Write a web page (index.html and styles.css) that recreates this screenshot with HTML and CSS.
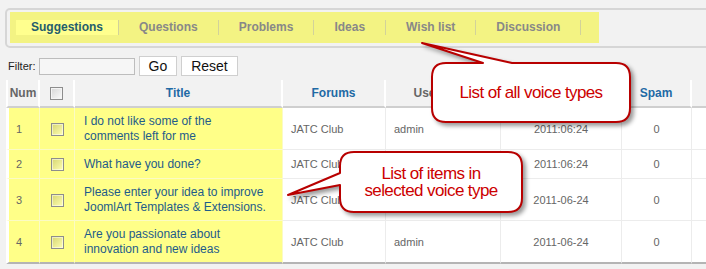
FILE: index.html
```html
<!DOCTYPE html>
<html lang="en">
<head>
  <meta charset="UTF-8" />
  <title>Voices</title>
  <link rel="stylesheet" href="styles.css">
</head>
<body>
<div class="page">

  <div class="tabs">
    <ul class="tab-list">
      <li class="active">Suggestions</li>
      <li>Questions</li>
      <li>Problems</li>
      <li>Ideas</li>
      <li>Wish list</li>
      <li>Discussion</li>
    </ul>
  </div>

  <div class="filter">
    <label for="search">Filter:</label>
    <input type="text" id="search" />
    <button>Go</button>
    <button>Reset</button>
  </div>

  <table class="grid">
    <colgroup>
      <col class="c-num"><col class="c-chk"><col class="c-title"><col class="c-forum">
      <col class="c-user"><col class="c-date"><col class="c-spam"><col class="c-more">
    </colgroup>
    <thead>
      <tr>
        <th class="plain">Num</th>
        <th><span class="check"></span></th>
        <th>Title</th>
        <th>Forums</th>
        <th class="plain">Username</th>
        <th>Created</th>
        <th>Spam</th>
        <th></th>
      </tr>
    </thead>
    <tbody>
      <tr>
        <td class="hl num">1</td>
        <td class="hl chk"><span class="check"></span></td>
        <td class="hl title">I do not like some of the<br>comments left for me</td>
        <td>JATC Club</td>
        <td>admin</td>
        <td class="center">2011:06:24</td>
        <td class="center">0</td>
        <td></td>
      </tr>
      <tr>
        <td class="hl num">2</td>
        <td class="hl chk"><span class="check"></span></td>
        <td class="hl title">What have you done?</td>
        <td>JATC Club</td>
        <td>admin</td>
        <td class="center">2011:06:24</td>
        <td class="center">0</td>
        <td></td>
      </tr>
      <tr>
        <td class="hl num">3</td>
        <td class="hl chk"><span class="check"></span></td>
        <td class="hl title">Please enter your idea to improve<br>JoomlArt Templates &amp; Extensions.</td>
        <td>JATC Club</td>
        <td>admin</td>
        <td class="center">2011-06-24</td>
        <td class="center">0</td>
        <td></td>
      </tr>
      <tr>
        <td class="hl num">4</td>
        <td class="hl chk"><span class="check"></span></td>
        <td class="hl title">Are you passionate about<br>innovation and new ideas</td>
        <td>JATC Club</td>
        <td>admin</td>
        <td class="center">2011-06-24</td>
        <td class="center">0</td>
        <td></td>
      </tr>
    </tbody>
  </table>

  <!-- annotation bubbles -->
  <div class="callout callout-types">
    <svg width="225" height="92" viewBox="0 0 225 92">
      <path d="M31 25 L68 25 L7 5 L97 25 L201 25 Q215 25 215 39 L215 70 Q215 84 201 84 L31 84 Q17 84 17 70 L17 39 Q17 25 31 25 Z" />
    </svg>
    <div class="callout-text">List of all voice types</div>
  </div>

  <div class="callout callout-items">
    <svg width="255" height="75" viewBox="0 0 255 75">
      <path d="M74 7 L228 7 Q242 7 242 21 L242 53 Q242 67 228 67 L74 67 Q60 67 60 53 L60 40 L8 50 L60 28 L60 21 Q60 7 74 7 Z" />
    </svg>
    <div class="callout-text">List of items in<br>selected voice type</div>
  </div>

</div>
</body>
</html>
```

FILE: styles.css
```css
html, body {
  overflow: hidden;
}

body {
  margin: 0;
  background-color: #f2f2f2;
  font-family: "Liberation Sans", Arial, sans-serif;
}

.page {
  position: relative;
  padding-top: 8px;
}

/* Voice type tabs */
.tabs {
  margin: 0 -30px 0 5px;
  border: 2px solid #d6d6d6;
  border-radius: 5px;
  padding: 2px 3px 3px;
}

.tab-list {
  display: flex;
  align-items: center;
  box-sizing: border-box;
  width: 589px;
  height: 31px;
  margin: 0;
  padding: 0 0 0 6px;
  list-style: none;
  background-color: #f3f383;
}

.tab-list li {
  font-size: 12px;
  font-weight: bold;
  line-height: 15px;
  color: #888;
  padding: 0 20px;
  border-right: 1px solid #d2d29a;
}

.tab-list li.active {
  background-color: #ffff8e;
  color: #245d6d;
  padding: 0 15px;
}

/* Filter */
.filter {
  display: flex;
  align-items: center;
  height: 20px;
  margin: 8px 0 0 8px;
}

.filter label {
  font-size: 11px;
  color: #222;
  margin-right: 3px;
}

.filter input {
  box-sizing: border-box;
  width: 96px;
  height: 17px;
  margin: 0 4px 0 0;
  border: 1px solid #bdbdbd;
  background: #f6f6f6;
}

.filter button {
  height: 20px;
  margin-right: 4px;
  padding: 0 9px;
  font-family: "Liberation Sans", Arial, sans-serif;
  font-size: 14px;
  color: #111;
  background: #fff;
  border: 1px solid #cfcfcf;
}

/* Table */
.grid {
  table-layout: fixed;
  width: 746px;
  margin: 4px 0 0 6px;
  border-collapse: separate;
  border-spacing: 0;
}

.c-num { width: 34px; }
.c-chk { width: 35px; }
.c-title { width: 208px; }
.c-forum { width: 103px; }
.c-user { width: 115px; }
.c-date { width: 121px; }
.c-spam { width: 70px; }
.c-more { width: 60px; }

.grid th {
  height: 26px;
  padding: 0;
  font-size: 12px;
  font-weight: bold;
  color: #1f6aa5;
  text-align: center;
  background-color: #f2f2f2;
  border-right: 2px solid #fff;
  border-bottom: 2px solid #cfcfcf;
}

.grid th:first-child {
  border-left: 2px solid #fff;
}

.grid th.plain {
  color: #666;
}

.grid td {
  height: 17px;
  padding: 6px 8px 5px;
  font-size: 11px;
  line-height: 15px;
  color: #666;
  background-color: #fff;
  border-right: 1px solid #ececec;
  border-bottom: 1px solid #ececec;
  vertical-align: middle;
}

.grid td:first-child {
  border-left: 3px solid #fff;
}

.grid tbody tr:last-child td {
  border-bottom: 2px solid #b4b4b4;
}

.grid td.hl {
  background-color: #ffff88;
  border-right-color: #fbfbc4;
  border-bottom-color: #fbfbc4;
}

.grid tbody tr:last-child td.hl {
  border-bottom-color: #b4b4b4;
}

.grid td.num {
  padding-left: 7px;
}

.grid td.chk {
  text-align: center;
  padding: 0;
}

.grid td.title {
  font-size: 12px;
  color: #1e5c8a;
  padding-left: 9px;
}

.grid td.center {
  text-align: center;
}

.check {
  display: inline-block;
  width: 11px;
  height: 11px;
  vertical-align: middle;
  border: 1px solid #8d8d8d;
  background: linear-gradient(135deg, #d6d6d6, #fbfbfb);
  box-shadow: inset 0 0 0 1px #f4f4f4;
}

.grid td .check {
  background: linear-gradient(135deg, rgba(0,0,0,0.16), rgba(255,255,255,0.35));
  box-shadow: inset 0 0 0 1px rgba(255,255,255,0.5);
}

/* Annotation bubbles */
.callout {
  position: absolute;
}

.callout svg {
  display: block;
  filter: drop-shadow(3px 3px 2px rgba(0,0,0,0.4));
}

.callout path {
  fill: #fff;
  stroke: #b80000;
  stroke-width: 2;
  stroke-linejoin: round;
}

.callout-text {
  position: absolute;
  display: flex;
  align-items: center;
  justify-content: center;
  text-align: center;
  font-size: 17px;
  letter-spacing: -0.6px;
  line-height: 17px;
  color: #cc0000;
}

.callout-types {
  left: 415px;
  top: 38px;
}

.callout-types .callout-text {
  left: 17px;
  top: 25px;
  width: 198px;
  height: 59px;
}

.callout-items {
  left: 280px;
  top: 145px;
}

.callout-items .callout-text {
  left: 60px;
  top: 7px;
  width: 182px;
  height: 60px;
}
```
